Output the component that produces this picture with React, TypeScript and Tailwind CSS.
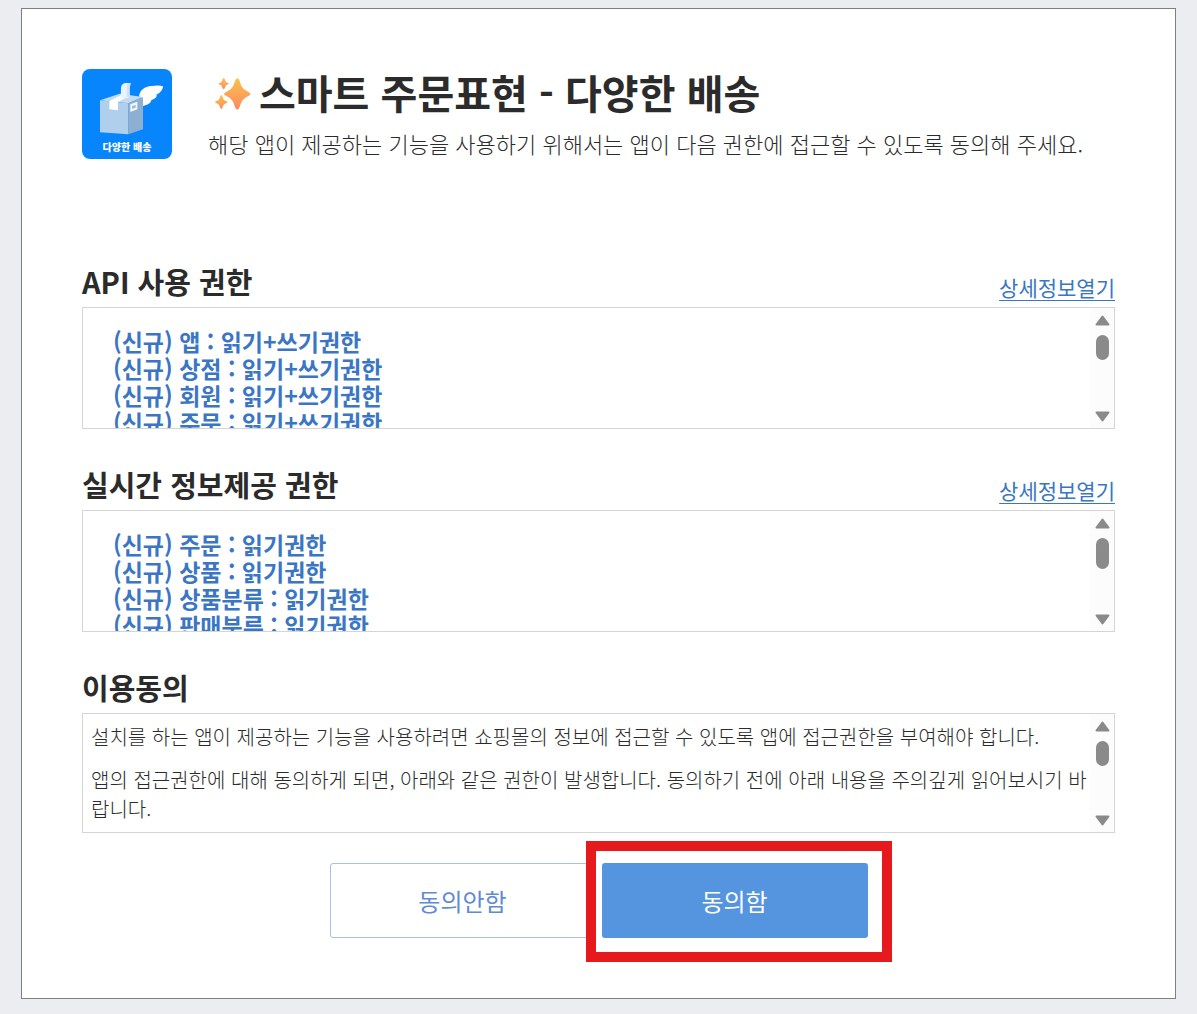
import { useState } from 'react'

const apiScopes = ['앱 : 읽기+쓰기권한', '상점 : 읽기+쓰기권한', '회원 : 읽기+쓰기권한', '주문 : 읽기+쓰기권한']
const webhookScopes = ['주문 : 읽기권한', '상품 : 읽기권한', '상품분류 : 읽기권한', '판매분류 : 읽기권한']

function AppLogo() {
  return (
    <svg viewBox="0 0 270 270" className="size-[90px] shrink-0 rounded-lg" role="img" aria-label="다양한 배송">
      <rect width="270" height="270" fill="#0785fd" />
      {/* box */}
      <path d="M54 94 L113 74 L183 84 L139 103 Z" fill="#c3daf0" />
      <path d="M54 94 L139 103 L139 196 L54 190 Z" fill="#b0cfec" />
      <path d="M139 103 L183 84 L183 181 L139 196 Z" fill="#8db0d1" />
      <path d="M82 97 L122 76 L142 80 L108 99 L108 124 L82 121 Z" fill="#fff" />
      <path d="M145 106 L166 98 L166 121 L145 129 Z" fill="#f2f8fe" />
      <path d="M150 111 L161 107 L161 116 L150 120 Z" fill="#9fbddb" />
      {/* wings */}
      <path d="M114 92 C118 82 116 70 117 58 C118 46 124 42 132 42 L147 43 C141 50 143 58 143 68 C144 78 143 84 137 88 C130 86 120 88 114 92 Z" fill="#eaf4fe" />
      <path d="M136 46 C133 56 136 70 134 84 L140 84 C144 74 140 60 147 43 Z" fill="#cfe3f6" />
      <path d="M171 82 C174 62 188 53 208 51 C220 50 232 48 243 52 C242 64 234 72 223 77 C227 81 220 90 208 93 C208 102 196 108 183 111 L183 86 Z" fill="#fff" />
      <text x="135" y="246" textAnchor="middle" fontSize="30" fill="#fff" className="font-black">
        다양한 배송
      </text>
    </svg>
  )
}

function Sparkles() {
  return (
    <svg viewBox="0 0 108 96" className="mt-1 h-8 w-9 shrink-0" aria-hidden="true">
      <defs>
        <linearGradient id="spark" x1="0" y1="0" x2="0" y2="1">
          <stop offset="0" stopColor="#fcc04a" />
          <stop offset="1" stopColor="#fb8b62" />
        </linearGradient>
      </defs>
      <g fill="url(#spark)">
        <path d="M67 1 Q71 1 74 9 C80 29 85 34 99 41 Q107 45 107 48 Q107 51 99 55 C85 62 80 67 74 87 Q71 95 67 95 Q63 95 60 87 C54 67 49 62 35 55 Q27 51 27 48 Q27 45 35 41 C49 34 54 29 60 9 Q63 1 67 1 Z" />
        <path d="M26 0 Q29 1 31 8 C32 12 34 13 40 15 Q43 17 40 19 C34 21 32 22 31 26 Q29 33 26 34 Q23 33 21 26 C20 22 18 21 12 19 Q9 17 12 15 C18 13 20 12 21 8 Q23 1 26 0 Z" />
        <path d="M19 51 Q22 52 24 60 C26 66 29 68 35 70 Q40 72 35 75 C29 77 26 79 24 85 Q22 93 19 94 Q16 93 14 85 C12 79 9 77 3 75 Q-2 72 3 70 C9 68 12 66 14 60 Q16 52 19 51 Z" />
      </g>
    </svg>
  )
}

function ScrollRail({ long = false }: { long?: boolean }) {
  return (
    <div className="flex w-6 shrink-0 flex-col items-center bg-[#fcfcfc] pt-[7px] pb-[6px]" aria-hidden="true">
      <svg viewBox="0 0 15 11" className="h-[11px] w-[15px]">
        <path d="M7.5 1.5 L13.5 9.5 H1.5 Z" fill="#8a8a8a" stroke="#8a8a8a" strokeWidth="2" strokeLinejoin="round" />
      </svg>
      <div className={`mt-[9px] w-[13px] rounded-full bg-[#8a8a8a] ${long ? 'h-[31px]' : 'h-[25px]'}`} />
      <svg viewBox="0 0 15 11" className="mt-auto h-[11px] w-[15px]">
        <path d="M7.5 9.5 L13.5 1.5 H1.5 Z" fill="#8a8a8a" stroke="#8a8a8a" strokeWidth="2" strokeLinejoin="round" />
      </svg>
    </div>
  )
}

function ScopeSection({ title, scopes, long }: { title: string; scopes: string[]; long?: boolean }) {
  return (
    <section className="mt-[35px]">
      <div className="mb-[6px] flex items-end justify-between">
        <h2 className="text-[29px] leading-10 font-bold">{title}</h2>
        <a href="#detail" className="text-[21px] leading-7 text-[#3a76c4] underline decoration-1 underline-offset-4">
          상세정보열기
        </a>
      </div>
      <div className="flex h-[122px] border border-[#d5d5d5]">
        <ul className="flex-1 overflow-y-auto pt-5 pl-[30px] text-[23px] leading-[27px] font-bold text-[#3a76c4] [scrollbar-width:none]">
          {scopes.map((scope) => (
            <li key={scope}>(신규) {scope}</li>
          ))}
        </ul>
        <ScrollRail long={long} />
      </div>
    </section>
  )
}

export default function App() {
  const [agreed, setAgreed] = useState(false)

  return (
    <div lang="ko" className="min-h-screen bg-[#ecedf1] px-[21px] pt-2 pb-[15px] font-['Noto_Sans_CJK_KR',sans-serif] text-[#2b2b2b]">
      <main className="border border-[#7f7f7f] bg-white p-[60px]">
        <header className="mb-[102px] flex gap-9">
          <AppLogo />
          <div>
            <h1 className="flex items-center gap-2 pl-[7px] text-[40px] leading-[46px] font-bold">
              <Sparkles />
              스마트 주문표현 - 다양한 배송
            </h1>
            <p className="mt-3 text-[22px] leading-8 font-light">
              해당 앱이 제공하는 기능을 사용하기 위해서는 앱이 다음 권한에 접근할 수 있도록 동의해 주세요.
            </p>
          </div>
        </header>

        <ScopeSection title="API 사용 권한" scopes={apiScopes} />
        <ScopeSection title="실시간 정보제공 권한" scopes={webhookScopes} long />

        <section className="mt-[35px]">
          <h2 className="mb-[6px] text-[29px] leading-10 font-bold">이용동의</h2>
          <div className="flex h-[120px] border border-[#d5d5d5]">
            <div className="flex-1 space-y-[14px] overflow-y-auto pt-2 pl-2 text-[20px] leading-[29px] font-light break-all [scrollbar-width:none]">
              <p>설치를 하는 앱이 제공하는 기능을 사용하려면 쇼핑몰의 정보에 접근할 수 있도록 앱에 접근권한을 부여해야 합니다.</p>
              <p>앱의 접근권한에 대해 동의하게 되면, 아래와 같은 권한이 발생합니다. 동의하기 전에 아래 내용을 주의깊게 읽어보시기 바랍니다.</p>
            </div>
            <ScrollRail />
          </div>
        </section>

        <div className="mt-[30px] flex justify-center gap-[6px] text-[24px]">
          <button
            type="button"
            onClick={() => setAgreed(false)}
            className="h-[75px] w-[266px] rounded-[3px] border border-[#a5c3da] bg-white text-[#5f8bd6]"
          >
            동의안함
          </button>
          <div className="relative">
            <button
              type="button"
              aria-pressed={agreed}
              onClick={() => setAgreed(true)}
              className="h-[75px] w-[266px] rounded-[3px] bg-[#5594de] text-white"
            >
              동의함
            </button>
            {/* highlight around the agree button */}
            <div className="pointer-events-none absolute -top-[22px] -right-6 -bottom-6 -left-4 border-10 border-[#e61a1c]" />
          </div>
        </div>
      </main>
    </div>
  )
}
